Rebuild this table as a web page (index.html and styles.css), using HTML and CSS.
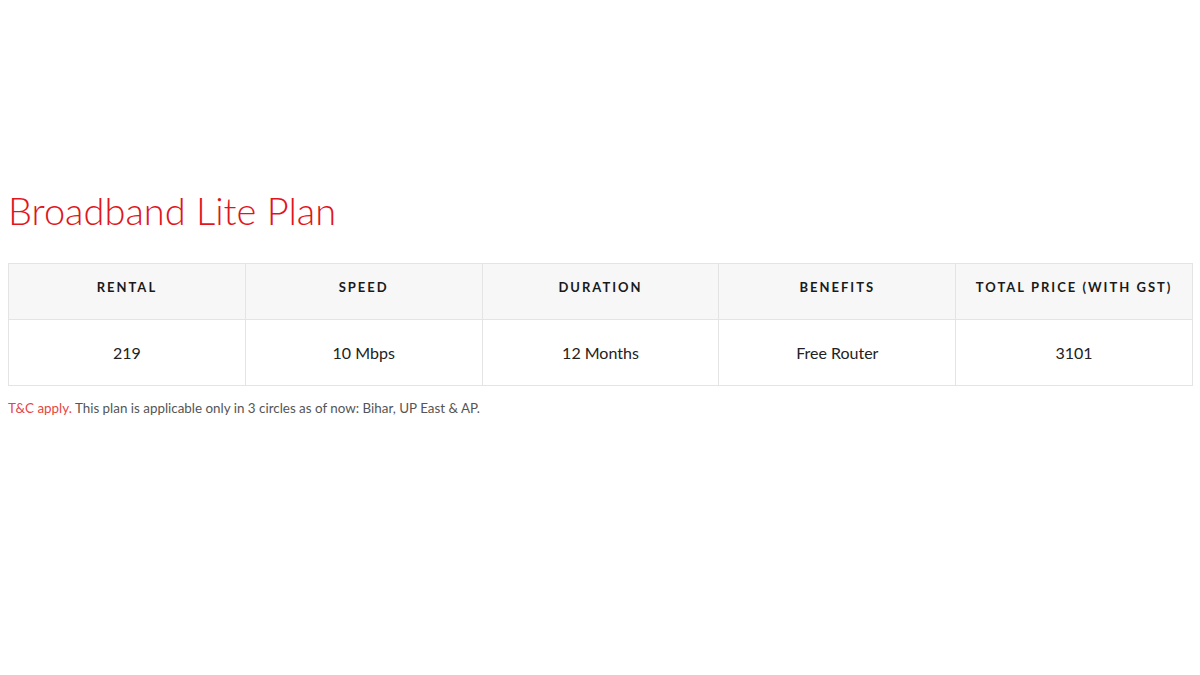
FILE: index.html
```html
<!DOCTYPE html>
<html>
<head>
<meta charset="utf-8">
<link rel="stylesheet" href="styles.css">
</head>
<body>
<main class="page">
  <h1 class="title">Broadband Lite Plan</h1>
  <table class="plan">
    <thead>
      <tr>
        <th>RENTAL</th>
        <th>SPEED</th>
        <th>DURATION</th>
        <th>BENEFITS</th>
        <th>TOTAL PRICE (WITH GST)</th>
      </tr>
    </thead>
    <tbody>
      <tr>
        <td>219</td>
        <td>10 Mbps</td>
        <td>12 Months</td>
        <td>Free Router</td>
        <td>3101</td>
      </tr>
    </tbody>
  </table>
  <p class="note"><span class="tc">T&amp;C apply.</span> This plan is applicable only in 3 circles as of now: Bihar, UP East &amp; AP.</p>
</main>
</body>
</html>
```
FILE: styles.css
```css
html, body {
  margin: 0;
  padding: 0;
  background: #ffffff;
}
.page {
  padding: 186px 7px 0 8px;
  font-family: "Lato", "Liberation Sans", sans-serif;
}
.title {
  margin: 0 0 29px 0;
  font-family: "Lato", sans-serif;
  font-weight: 300;
  font-size: 38px;
  line-height: 48px;
  color: #e0161c;
}
.plan {
  width: 1185px;
  border-collapse: collapse;
  table-layout: fixed;
  border: 1px solid #e4e4e4;
}
.plan th, .plan td {
  border: 1px solid #e4e4e4;
  text-align: center;
  padding: 0;
}
.plan th {
  height: 45px;
  padding-bottom: 10px;
  background: #f7f7f7;
  font-size: 13px;
  font-weight: 700;
  letter-spacing: 2px;
  color: #1a1a1a;
}
.plan td {
  height: 65px;
  font-size: 16px;
  color: #222;
}
.note {
  margin: 14px 0 0 0;
  font-size: 13.4px;
  color: #555;
}
.tc {
  color: #e64545;
}
```
